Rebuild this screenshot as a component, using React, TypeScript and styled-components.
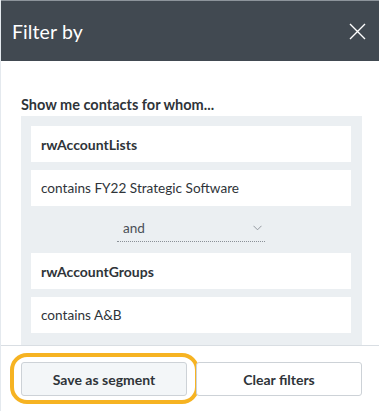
import styled, { createGlobalStyle } from "styled-components";

const GlobalStyle = createGlobalStyle`
    html, body {
        margin: 0;
        padding: 0;
        background: #ffffff;
    }
    body {
        font-family: Lato, "Open Sans", sans-serif;
        color: #2f3439;
    }
`;

const Panel = styled.div`
    display: flex;
    flex-direction: column;
    width: 379px;
    height: 411px;
    overflow: hidden;
    border-left: 1px solid #e4e9ee;
    box-sizing: border-box;
`;

const Header = styled.header`
    display: flex;
    align-items: center;
    justify-content: space-between;
    flex: 0 0 61px;
    padding: 0 13px 0 12px;
    margin-left: -1px;
    background: #414951;
    border-top: 1px solid #8d949b;
    box-sizing: border-box;
`;

const Title = styled.h2`
    margin: 0;
    font-size: 19.5px;
    font-weight: 400;
    color: #ffffff;
    letter-spacing: 0.1px;
`;

const CloseButton = styled.button`
    display: flex;
    padding: 0;
    border: 0;
    background: none;
    cursor: pointer;
`;

const Body = styled.div`
    flex: 1;
    overflow: hidden;
    padding: 35px 17px 0 20px;
`;

const Lead = styled.p`
    margin: 0 0 3px;
    font-size: 14.5px;
    font-weight: 700;
    line-height: 17px;
    color: #2f3439;
`;

const Group = styled.div`
    display: flex;
    flex-direction: column;
    gap: 8px;
    padding: 10px 11px 20px 10px;
    background: #ebeff2;
`;

const Field = styled.div<{ $strong?: boolean }>`
    display: flex;
    align-items: center;
    height: 36px;
    padding: 0 10px;
    background: #ffffff;
    font-size: ${({ $strong }) => ($strong ? "14px" : "13.6px")};
    font-weight: ${({ $strong }) => ($strong ? 700 : 400)};
    color: #2f3439;
`;

const Joiner = styled.div`
    display: flex;
    justify-content: center;
    height: 31px;
`;

const Select = styled.div`
    display: flex;
    align-items: center;
    justify-content: space-between;
    width: 148px;
    height: 28px;
    padding: 0 3px 0 6px;
    box-sizing: border-box;
    border-bottom: 1px dotted #8a9097;
    font-size: 13.6px;
    color: #4a5057;
`;

const Footer = styled.footer`
    display: flex;
    gap: 9px;
    flex: 0 0 66px;
    padding: 16px 17px 0 20px;
    border-top: 1px solid #d9dee3;
    box-sizing: border-box;
`;

const Button = styled.button<{ $focused?: boolean }>`
    position: relative;
    flex: 1;
    height: 34px;
    border: 1px solid #cdd2d7;
    border-radius: 3px;
    background: ${({ $focused }) => ($focused ? "#f3f6f8" : "#ffffff")};
    font-family: inherit;
    font-size: 14px;
    font-weight: 700;
    color: #2f3439;
    cursor: pointer;

    &::after {
        content: "";
        display: ${({ $focused }) => ($focused ? "block" : "none")};
        position: absolute;
        top: -10px;
        bottom: -9px;
        left: -12px;
        right: -13px;
        border: 4px solid #f6b322;
        border-radius: 17px;
        pointer-events: none;
    }
`;

function App() {
    return (
        <>
            <GlobalStyle />
            <Panel>
                <Header>
                    <Title>Filter by</Title>
                    <CloseButton aria-label="Close">
                        <svg width="17" height="17" viewBox="0 0 17 17">
                            <path d="M1 1 L16 16 M16 1 L1 16" stroke="#ffffff" strokeWidth="1.4" fill="none" />
                        </svg>
                    </CloseButton>
                </Header>

                <Body>
                    <Lead>Show me contacts for whom...</Lead>
                    <Group>
                        <Field $strong>rwAccountLists</Field>
                        <Field>contains FY22 Strategic Software</Field>
                        <Joiner>
                            <Select>
                                <span>and</span>
                                <svg width="9" height="6" viewBox="0 0 9 6">
                                    <path d="M0.5 0.8 L4.5 4.8 L8.5 0.8" stroke="#8a9097" strokeWidth="0.9" fill="none" />
                                </svg>
                            </Select>
                        </Joiner>
                        <Field $strong>rwAccountGroups</Field>
                        <Field>contains A&amp;B</Field>
                    </Group>
                </Body>

                <Footer>
                    <Button $focused>Save as segment</Button>
                    <Button>Clear filters</Button>
                </Footer>
            </Panel>
        </>
    );
}

export default App;
